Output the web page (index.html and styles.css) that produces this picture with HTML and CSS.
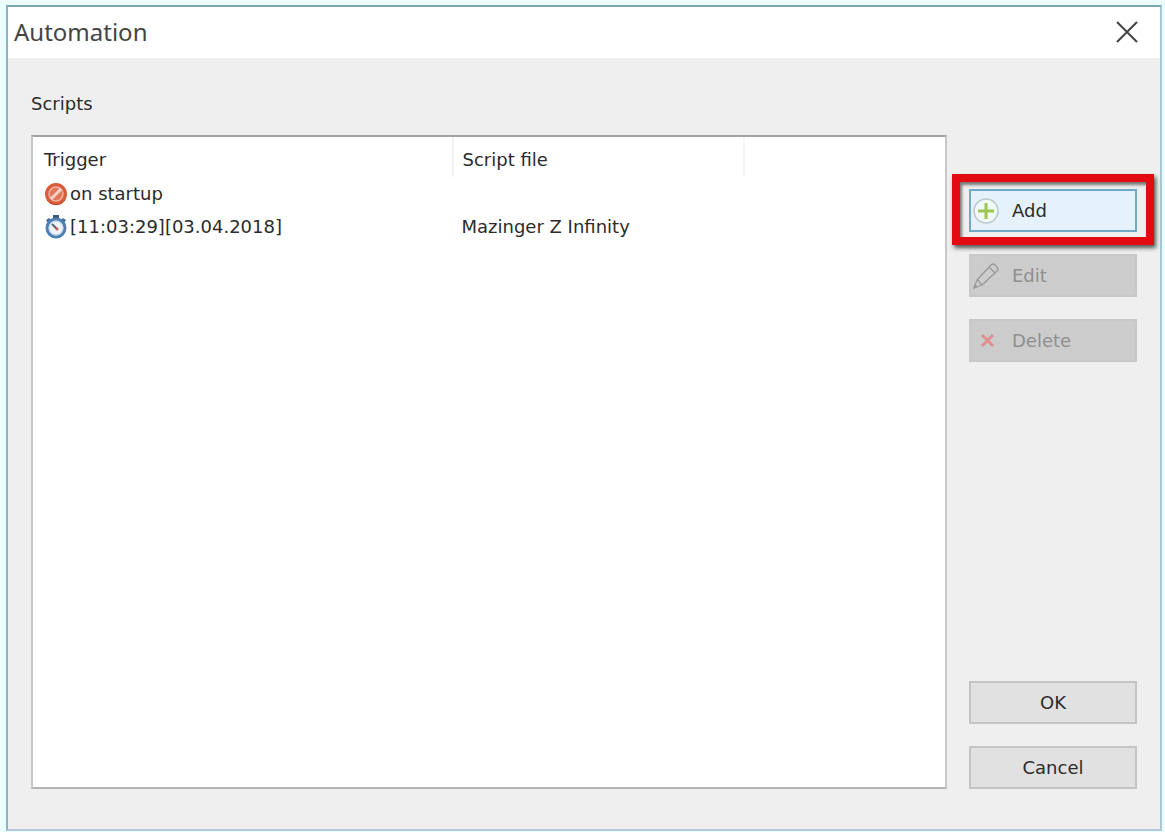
FILE: index.html
```
<!DOCTYPE html>
<html lang="en">
<head>
    <meta charset="UTF-8">
    <meta name="viewport" content="width=device-width, initial-scale=1.0">
    <title>Automation</title>
    <link rel="stylesheet" href="styles.css">
</head>
<body>
    <div class="dialog" role="dialog" aria-labelledby="dialogTitle">
        <header class="title-bar">
            <h1 id="dialogTitle">Automation</h1>
            <button type="button" class="close-btn" aria-label="Close">
                <svg width="22" height="22" viewBox="0 0 22 22" fill="none" stroke="#444" stroke-width="2">
                    <path d="M1 1L21 21M21 1L1 21"/>
                </svg>
            </button>
        </header>

        <main class="content">
            <h2 id="scriptsLabel">Scripts</h2>
            <div class="columns">
                <div class="list-box">
                    <table aria-labelledby="scriptsLabel">
                        <thead>
                            <tr>
                                <th class="col-trigger">Trigger</th>
                                <th class="col-file">Script file</th>
                                <th></th>
                            </tr>
                        </thead>
                        <tbody>
                            <tr>
                                <td>
                                    <div class="trigger">
                                        <svg width="24" height="24" viewBox="0 0 24 24" fill="none">
                                            <circle cx="12" cy="12" r="11" fill="#d95b3c"/>
                                            <circle cx="12" cy="12" r="7" fill="#e2765a" stroke="#f0b3a0" stroke-width="1.5"/>
                                            <path d="M7 17L17 7" stroke="#f6d2c6" stroke-width="3"/>
                                            <path d="M3 18A11 11 0 0 0 21 18" stroke="#bf4a2c"/>
                                        </svg>
                                        <span>on startup</span>
                                    </div>
                                </td>
                                <td></td>
                                <td></td>
                            </tr>
                            <tr>
                                <td>
                                    <div class="trigger">
                                        <svg width="24" height="24" viewBox="0 0 24 24" fill="none">
                                            <path d="M9 0H15V4H9Z" fill="#3c5674"/>
                                            <path d="M2 5L5 3L7 5L4 8ZM22 5L19 3L17 5L20 8Z" fill="#4a6c92"/>
                                            <circle cx="12" cy="13" r="9" fill="#eef3f8" stroke="#4d7fb5" stroke-width="3"/>
                                            <circle cx="12" cy="13" r="7" stroke="#b6cce2"/>
                                            <path d="M8 9L13 14" stroke="#5a6070" stroke-width="2"/>
                                            <circle cx="13" cy="14" r="1.5" fill="#cf5b50"/>
                                        </svg>
                                        <span>[11:03:29][03.04.2018]</span>
                                    </div>
                                </td>
                                <td>Mazinger Z Infinity</td>
                                <td></td>
                            </tr>
                        </tbody>
                    </table>
                </div>

                <div class="side">
                    <div class="actions">
                        <div class="highlight">
                            <button type="button" class="btn btn-icon btn-active">
                                <svg width="28" height="28" viewBox="0 0 28 28" fill="none">
                                    <circle cx="14" cy="14" r="12" fill="#f1f8f8" stroke="#b9c9c8" stroke-width="1.5"/>
                                    <path d="M14 6V22M6 14H22" stroke="#9cc64d" stroke-width="3"/>
                                </svg>
                                Add
                            </button>
                        </div>
                        <button type="button" class="btn btn-icon" disabled>
                            <svg width="28" height="28" viewBox="0 0 28 28" fill="none" stroke="#999" stroke-width="1.3" stroke-linejoin="round">
                                <path d="M2 26L5 18L19 3Q21 1 23 3L25 5Q27 7 25 9L10 23Z"/>
                                <path d="M5 18L7 19L8 21L10 23M17 5L23 11"/>
                                <path d="M2 26L3 23L5 25Z" fill="#999"/>
                            </svg>
                            Edit
                        </button>
                        <button type="button" class="btn btn-icon" disabled>
                            <svg width="28" height="28" viewBox="0 0 28 28" fill="none" stroke="#e08f8f" stroke-width="3">
                                <path d="M10 8L21 19M21 8L10 19"/>
                            </svg>
                            Delete
                        </button>
                    </div>
                    <div class="actions">
                        <button type="button" class="btn">OK</button>
                        <button type="button" class="btn">Cancel</button>
                    </div>
                </div>
            </div>
        </main>
    </div>
</body>
</html>
```

FILE: styles.css
```
* {
    box-sizing: border-box;
}
body {
    margin: 0;
    padding: 5px 3px 1px 6px;
    min-height: 100vh;
    display: flex;
    background: #ecfdff;
    font-family: "DejaVu Sans", Verdana, sans-serif;
    font-size: 18px;
    color: #2b2b2b;
}
h1, h2 {
    margin: 0;
    font-weight: normal;
}
svg {
    flex: none;
}
.dialog {
    flex: 1;
    display: flex;
    flex-direction: column;
    border: 2px solid #8fb4c0;
    border-top-color: #7fa5ad;
    border-right-color: #a9c6d8;
    border-bottom-color: #b4c8dc;
    background: #efefef;
}
.title-bar {
    display: flex;
    align-items: center;
    justify-content: space-between;
    height: 51px;
    padding: 0 22px 2px 6px;
    background: #fff;
}
.title-bar h1 {
    font-family: "Noto Sans", sans-serif;
    font-size: 24px;
    color: #444;
}
.close-btn {
    display: flex;
    padding: 0;
    border: 0;
    background: none;
}
.content {
    flex: 1;
    display: flex;
    flex-direction: column;
    padding: 34px 23px 40px;
}
.content h2 {
    font-size: 18px;
    line-height: 24px;
    margin-bottom: 19px;
}
.columns {
    flex: 1;
    display: flex;
    gap: 22px;
}
.list-box {
    flex: 1;
    border: 2px solid #c8c8c8;
    border-top-color: #a4a4a4;
    border-bottom-color: #b4b4b4;
    background: #fff;
}
table {
    width: 100%;
    table-layout: fixed;
    border-collapse: collapse;
}
th, td {
    padding: 0 9px;
    text-align: left;
    font-weight: normal;
}
th:first-child, td:first-child {
    padding-left: 11px;
}
th {
    height: 40px;
    padding-top: 5px;
    border-right: 2px solid #f3f3f3;
}
th:last-child {
    border-right: 0;
}
td {
    height: 33px;
}
.col-trigger {
    width: 46%;
}
.col-file {
    width: 32%;
}
.trigger {
    display: flex;
    align-items: center;
    gap: 2px;
}
.side {
    width: 168px;
    padding-top: 54px;
    display: flex;
    flex-direction: column;
    justify-content: space-between;
}
.actions {
    display: flex;
    flex-direction: column;
    gap: 22px;
}
.btn {
    width: 100%;
    height: 43px;
    padding: 0 4px;
    border: 2px solid #c4c4c4;
    background: #e1e1e1;
    font-family: inherit;
    font-size: 18px;
    color: #2b2b2b;
}
.btn:disabled {
    border-color: #c8c8c8;
    background: #cccccc;
    color: #8f8f8f;
}
.btn-icon {
    display: flex;
    align-items: center;
    gap: 12px;
    padding: 0 1px;
}
.btn-active {
    border-color: #6fa9c6;
    background: #e5f1fb;
}
/* red marker drawn round the button */
.highlight {
    position: relative;
}
.highlight::after {
    content: "";
    position: absolute;
    inset: -15px -17px -13px;
    border: 8px solid #e30b12;
    box-shadow: 2px 3px 4px #555, inset 2px 3px 3px #777;
    pointer-events: none;
}
```
